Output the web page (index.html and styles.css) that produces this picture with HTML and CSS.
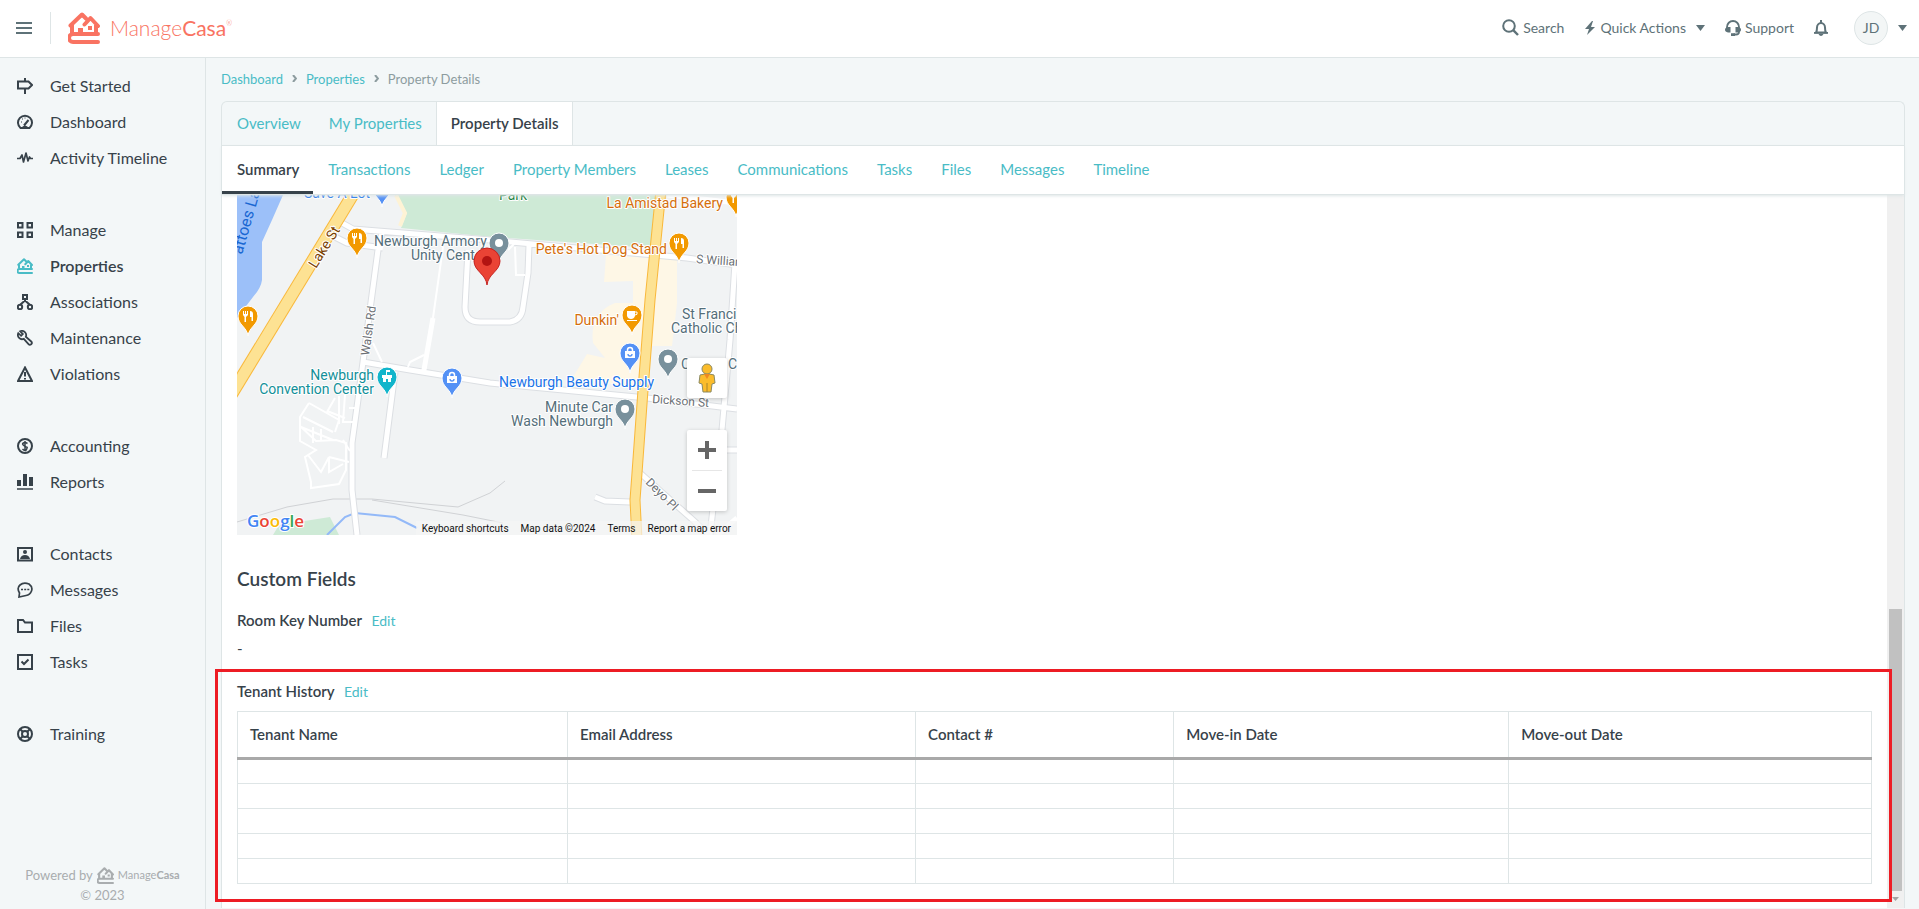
FILE: index.html
```html
<!DOCTYPE html>
<html lang="en">
<head>
	<meta charset="utf-8">
	<title>Property Details - ManageCasa</title>
	<link rel="stylesheet" href="styles.css">
</head>
<body>
  <svg class="defs" aria-hidden="true">
    <symbol id="house" viewBox="0 0 32 32">
      <g fill="none" stroke="currentColor" stroke-width="4" stroke-linecap="round" stroke-linejoin="round">
        <path d="M30 22H5a4 4 0 0 0 0 8h25"/>
        <path d="M4 21v-8M28 21v-8" stroke-linecap="butt"/>
        <path d="M2.500 13.500L14 2.500l4 4M30 14l-7.500-8-6 6.500"/>
      </g>
      <path fill="currentColor" d="M10 21v-5h5v5zM20 14h4v4h-4z"/>
    </symbol>
    <symbol id="pin" viewBox="-10 -10 20 30" overflow="visible">
      <path d="M0 20C-1 11-10 9-10 0a10 10 0 0 1 20 0C10 9 1 11 0 20z"/>
    </symbol>
    <symbol id="fork" viewBox="-6 -6 12 12" overflow="visible">
      <path d="M-5-5h1v3h1v-3h1v3h1v-3h1v4l-2 2v5h-1.500v-5l-1.500-2zM2-5c2 0 3 1 3 3v7H3.500V1H2z" fill="#fff"/>
    </symbol>
    <symbol id="bag" viewBox="-6 -6 12 12" overflow="visible">
      <path d="M-5-2H5v7H-5z" fill="#fff"/>
      <path d="M-2.500-2v-1a2.500 2.500 0 0 1 5 0v1" fill="none" stroke="#fff" stroke-width="1.500"/>
      <path d="M-2 1a2 2 0 0 0 4 0" fill="none" stroke="#5491f5" stroke-width="1.300"/>
    </symbol>
  </svg>

  <header class="header">
    <button class="menu-btn" aria-label="Menu">
      <svg width="16" height="14" viewBox="0 0 16 14"><path d="M0 2h16M0 7h16M0 12h16" stroke="currentColor" stroke-width="2"/></svg>
    </button>
    <a class="brand" href="#">
      <svg class="brand-icon"><use href="#house"/></svg>
      <span class="brand-name">Manage<b>Casa</b><sup>®</sup></span>
    </a>
    <nav class="tools">
      <button class="tool">
        <svg width="17" height="17" viewBox="0 0 17 17" fill="none" stroke="currentColor" stroke-width="2"><circle cx="7" cy="7" r="5.800"/><path d="M11.200 11.200l4.800 4.800" stroke-width="2.400"/></svg>
        Search
      </button>
      <button class="tool">
        <svg width="12" height="14" viewBox="0 0 12 14"><path fill="currentColor" d="M8 0L1 8h4l-2 6 8-8H7l2-6z"/></svg>
        Quick Actions
        <svg class="caret" width="9" height="6" viewBox="0 0 9 6"><path fill="currentColor" d="M0 0h9L4.500 6z"/></svg>
      </button>
      <button class="tool">
        <svg width="16" height="16" viewBox="0 0 16 16"><path d="M2 9V7a6 6 0 0 1 12 0v5q0 2.500-3 2.500H8.500" fill="none" stroke="currentColor" stroke-width="1.800"/><path fill="currentColor" d="M5.500 7v5.500H3Q0 12 0 9.800T3 7zM10.500 7v5.500H13q3-.5 3-2.700T13 7zM6 13.200h4V16H6z"/></svg>
        Support
      </button>
      <button class="tool" aria-label="Notifications">
        <svg width="14" height="16" viewBox="0 0 14 16"><path d="M2 12.500Q3 11 3 7.500a4 4.500 0 0 1 8 0q0 3.500 1 5z" fill="none" stroke="currentColor" stroke-width="2"/><path fill="currentColor" d="M6 0h2v3H6zM0 12h14v1.800H0zM4.500 14h5q-1 2-2.500 2t-2.500-2z"/></svg>
      </button>
      <button class="tool account">
        <span class="avatar">JD</span>
        <svg width="9" height="6" viewBox="0 0 9 6"><path fill="currentColor" d="M0 0h9L4.500 6z"/></svg>
      </button>
    </nav>
  </header>

  <div class="layout">
    <aside class="sidebar">
      <nav>
        <ul class="nav-group">
          <li><a href="#"><svg viewBox="0 0 16 16"><path d="M8 0v3M8 11v5M1 3.500h10.500L15 7l-3.500 3.500H1z"/></svg>Get Started</a></li>
          <li><a href="#"><svg viewBox="0 0 16 16"><path d="M3.500 14A7 7 0 1 1 12.500 14z"/><path d="M7 11.500l4.500-5.500" /><path d="M4 8h1M5 5h1M8 3.500v1" stroke-width="1"/><path class="solid" d="M4 14q4-5 8 0z"/></svg>Dashboard</a></li>
          <li><a href="#"><svg viewBox="0 0 16 16"><path d="M0 8.500h3L5 5l1.500 7L9 3l2 8 1.500-4 1 1.500H16" stroke-width="1.700" stroke-linejoin="round"/></svg>Activity Timeline</a></li>
        </ul>
        <ul class="nav-group">
          <li><a href="#"><svg viewBox="0 0 16 16"><path d="M1 1h4.500v4.500H1zM10.500 1H15v4.500h-4.500zM1 10.500h4.500V15H1zM10.500 10.500H15V15h-4.500z"/></svg>Manage</a></li>
          <li><a class="active" href="#"><svg class="house"><use href="#house"/></svg>Properties</a></li>
          <li><a href="#"><svg viewBox="0 0 16 16"><path d="M6 1h4v4H6zM8 5v2M8 6.500L3.500 10.500M8 6.500l4.500 4"/><circle cx="3" cy="13" r="2.200"/><circle cx="13" cy="13" r="2.200"/></svg>Associations</a></li>
          <li><a href="#"><svg viewBox="0 0 16 16"><path d="M1.300 3.200a4.200 4.200 0 0 0 5.500 5.600l4.700 5.400q1.200 1.200 2.700 0t0-2.700L8.800 6.800a4.200 4.200 0 0 0-5.600-5.500l2.600 2.800-1.700 1.700z" stroke-width="1.800"/></svg>Maintenance</a></li>
          <li><a href="#"><svg viewBox="0 0 16 16"><path d="M8 1.500L15 15H1zM8 6v4.500M8 12v1.500"/></svg>Violations</a></li>
        </ul>
        <ul class="nav-group">
          <li><a href="#"><svg viewBox="0 0 16 16"><circle cx="8" cy="8" r="7"/><path d="M10.500 5.500Q8 4 6.300 5t.7 2.700 3 1.500-.5 2.300-4-.5M8 3v10" stroke-width="1.500"/></svg>Accounting</a></li>
          <li><a href="#"><svg viewBox="0 0 16 16"><path d="M0 15h16" stroke-width="1.500"/><path d="M2 6v6M8 0v12M14 3v9" stroke-width="4"/></svg>Reports</a></li>
        </ul>
        <ul class="nav-group">
          <li><a href="#"><svg viewBox="0 0 16 16"><path d="M1 2h14v12.500H1z"/><path class="solid" d="M3 13q1-4 5-4t5 4z"/><circle class="solid" cx="8" cy="6" r="2"/></svg>Contacts</a></li>
          <li><a href="#"><svg viewBox="0 0 16 16"><path d="M2 15l.5-4Q-.5 6 3 3t9-1q4 3 2.500 7T9 13.500z" stroke-width="1.700"/><path d="M4 7.500h2M7.200 7.500h2M10.300 7.500h2" stroke-width="1.500"/></svg>Messages</a></li>
          <li><a href="#"><svg viewBox="0 0 16 16"><path d="M1 2h5l2 2.500h7V14H1z"/></svg>Files</a></li>
          <li><a href="#"><svg viewBox="0 0 16 16"><path d="M1 1h14v14H1zM4.500 7.500l2.500 2.500 4.500-4.500"/></svg>Tasks</a></li>
        </ul>
        <ul class="nav-group">
          <li><a href="#"><svg viewBox="0 0 16 16"><circle cx="8" cy="8" r="7"/><circle cx="8" cy="8" r="3"/><path d="M3 3l3 3M13 3l-3 3M3 13l3-3M13 13l-3-3"/></svg>Training</a></li>
        </ul>
      </nav>
      <footer class="powered">
        <p>Powered by <svg class="powered-icon"><use href="#house"/></svg> <span class="powered-name">Manage<b>Casa</b></span></p>
        <p>© 2023</p>
      </footer>
    </aside>

    <main class="main">
      <nav class="breadcrumb">
        <a href="#">Dashboard</a>
        <svg width="5" height="7" viewBox="0 0 5 7"><path d="M1 0l3 3.500L1 7" fill="none" stroke="currentColor" stroke-width="2"/></svg>
        <a href="#">Properties</a>
        <svg width="5" height="7" viewBox="0 0 5 7"><path d="M1 0l3 3.500L1 7" fill="none" stroke="currentColor" stroke-width="2"/></svg>
        <span>Property Details</span>
      </nav>

      <div class="panel">
        <nav class="tabs">
          <a href="#">Overview</a>
          <a href="#">My Properties</a>
          <a class="active" href="#">Property Details</a>
        </nav>
        <nav class="subtabs">
          <a class="active" href="#">Summary</a>
          <a href="#">Transactions</a>
          <a href="#">Ledger</a>
          <a href="#">Property Members</a>
          <a href="#">Leases</a>
          <a href="#">Communications</a>
          <a href="#">Tasks</a>
          <a href="#">Files</a>
          <a href="#">Messages</a>
          <a href="#">Timeline</a>
        </nav>

        <div class="panel-body">
          <div class="content">
            <div class="map">
              <svg class="map-canvas" viewBox="0 0 500 340">
                <rect width="500" height="340" fill="#f1f3f4"/>
                <!-- water and parks -->
                <path d="M0 0h46L35 25 25 47v38q-1 8-9 17L0 123z" fill="#9cc0f9"/>
                <path d="M158 0l12 18-6 15 91 9 160 11 4-53z" fill="#ceead6"/>
                <path d="M159 0l9 18-5 13" fill="none" stroke="#fef3d5" stroke-width="4"/>
                <path d="M36 340l6-10 51-8 9 18z" fill="#ceead6"/>
                <path d="M90 340l18-18 10-4 40 4 22 11" fill="none" stroke="#93b9f8" stroke-width="2"/>
                <path d="M369 60l71 5v43l-5 43h-27v44l-72-13 14-23 18 4-12-15q-4-30 22-40h18v-22l-29 1z" fill="#fef7e6"/>
                <g fill="none" stroke="#d0d2d5">
                  <path d="M0 327l50-15 46-8h39l86 8 32-14 15-12M135 305l91 15 40 8"/>
                </g>
                <!-- side roads -->
                <g fill="none" stroke="#dcdfe3" stroke-width="7">
                  <path d="M105 28l11 6 137 11 197 18 50 7M98 42l12 6 36 5M145 38l-4 17-15 112-6 45-5 36v47l5 45M126 167l47 8 80 13 157 15 90 11M231 55l-3 57q0 15 15 15h30q12-2 13-15l5-34 1-28M158 177l-11 86M403 278l53 47 16 15M498 68l-5 77-8 90-12 105M358 302l10 4 25 1M490 255h10"/>
                </g>
                <g fill="none" stroke="#fff" stroke-width="5">
                  <path d="M105 28l11 6 137 11 197 18 50 7M98 42l12 6 36 5M145 38l-4 17-15 112-6 45-5 36v47l5 45M126 167l47 8 80 13 157 15 90 11M231 55l-3 57q0 15 15 15h30q12-2 13-15l5-34 1-28M158 177l-11 86M403 278l53 47 16 15M498 68l-5 77-8 90-12 105M358 302l10 4 25 1M490 255h10M196 123l-9 52M480 340l20-17M430 0l70 8"/>
                </g>
                <g fill="none" stroke="#fff" stroke-width="2">
                  <path d="M206 52l-10 71M187 160l-14 7-2 5M136 148l9 19M278 52l1 28h9M271 55l7-7"/>
                  <path d="M72 208l-9 14v24l16 9-11 7 6 25v6l28-4 7-14V248l-10-3-20 1-16-15M72 208l30 17-4 12M66 222l30 15M64 232l32 13M98 203l-8 14M102 201v28M108 200l-2 27h12M90 216l18 7M112 213h9M106 245l7 11M92 262l20 5M92 262l-8 15-13-17M92 262v15l14-8M76 232v16M84 234v12"/>
                </g>
                <!-- main roads -->
                <g fill="none" stroke="#f9b83a" stroke-width="13">
                  <path d="M118-4L-6 200"/>
                  <path stroke-width="11" d="M424-5l-11 110-7 90-6 83-2 27 2 40"/>
                </g>
                <g fill="none" stroke="#fde293" stroke-width="11">
                  <path d="M118-4L-6 200"/>
                  <path stroke-width="9" d="M424-5l-11 110-7 90-6 83-2 27 2 40"/>
                </g>
                <!-- pins -->
                <g stroke="#fff" stroke-width="1">
                  <g fill="#f29900">
                    <use href="#pin" x="110" y="33" width="20" height="30"/>
                    <use href="#pin" x="1" y="111" width="20" height="30"/>
                    <use href="#pin" x="432" y="38" width="20" height="30"/>
                    <use href="#pin" x="385" y="110" width="20" height="30"/>
                    <use href="#pin" x="489" y="-8" width="20" height="30"/>
                  </g>
                  <g fill="#5491f5">
                    <use href="#pin" x="135" y="-18" width="20" height="30"/>
                    <use href="#pin" x="205" y="173" width="20" height="30"/>
                    <use href="#pin" x="383" y="148" width="20" height="30"/>
                  </g>
                  <g fill="#78909c">
                    <use href="#pin" x="252" y="38" width="20" height="30"/>
                    <use href="#pin" x="421" y="154" width="20" height="30"/>
                    <use href="#pin" x="378" y="204" width="20" height="30"/>
                  </g>
                  <use href="#pin" x="140" y="172" width="20" height="30" fill="#12b5cb"/>
                </g>
                <use href="#fork" x="114" y="37" width="12" height="12"/>
                <use href="#fork" x="5" y="115" width="12" height="12"/>
                <use href="#fork" x="436" y="42" width="12" height="12"/>
                <use href="#fork" x="493" y="-4" width="12" height="12"/>
                <use href="#bag" x="209" y="177" width="12" height="12"/>
                <use href="#bag" x="387" y="152" width="12" height="12"/>
                <path d="M390 116h8v5q-1 3-4 3t-4-3zM390 125h10v1h-10z" fill="#fff"/>
                <path d="M398 117h2q1 3-2 3" fill="none" stroke="#fff"/>
                <path d="M145 180h10v3h-1v4h-3v-3h-2v3h-3v-4h-1zM149 175h4v2h-3v3h-1z" fill="#fff"/>
                <g fill="#fff"><circle cx="262" cy="48" r="4"/><circle cx="431" cy="164" r="4"/><circle cx="388" cy="214" r="4"/></g>
                <!-- labels -->
                <g class="map-label">
                  <g fill="#546e7a">
                    <text x="137" y="51">Newburgh Armory</text>
                    <text x="174" y="65">Unity Center</text>
                    <text x="445" y="124">St Francis</text>
                    <text x="434" y="138">Catholic Church</text>
                    <text x="444" y="174">C</text>
                    <text x="491" y="174">C</text>
                    <text x="376" y="217" text-anchor="end">Minute Car</text>
                    <text x="376" y="231" text-anchor="end">Wash Newburgh</text>
                  </g>
                  <g fill="#d56e0c">
                    <text x="486" y="13" text-anchor="end">La Amistad Bakery</text>
                    <text x="430" y="59" text-anchor="end">Pete's Hot Dog Stand</text>
                    <text x="382" y="130" text-anchor="end">Dunkin'</text>
                  </g>
                  <g fill="#1a73e8">
                    <text x="67" y="3">Save A Lot</text>
                    <text x="262" y="192">Newburgh Beauty Supply</text>
                  </g>
                  <g fill="#129099">
                    <text x="137" y="185" text-anchor="end">Newburgh</text>
                    <text x="137" y="199" text-anchor="end">Convention Center</text>
                  </g>
                  <text x="262" y="5" fill="#188038">Park</text>
                  <text class="water" transform="translate(5 60) rotate(-74)" fill="#1967d2">attoes Lake</text>
                  <text transform="translate(79 74) rotate(-58)" fill="#7a4100">Lake St</text>
                  <g class="street" fill="#6b7075">
                    <text transform="translate(132 161) rotate(-82)">Walsh Rd</text>
                    <text transform="translate(459 68) rotate(4)">S William St</text>
                    <text transform="translate(415 208) rotate(4)">Dickson St</text>
                    <text transform="translate(408 288) rotate(45)">Deyo Pl</text>
                  </g>
                </g>
                <path d="M250 90c-1-11-13-14-13-24a13 13 0 0 1 26 0c0 10-12 13-13 24z" fill="#ea4335" stroke="#c5221f"/>
                <circle cx="250" cy="66" r="5" fill="#b31412"/>
                <text class="google" x="10" y="332"><tspan fill="#4285f4">G</tspan><tspan fill="#ea4335">o</tspan><tspan fill="#fbbc04">o</tspan><tspan fill="#4285f4">g</tspan><tspan fill="#34a853">l</tspan><tspan fill="#ea4335">e</tspan></text>
              </svg>
              <div class="map-controls">
                <button class="pegman" aria-label="Street View">
                  <svg width="18" height="30" viewBox="0 0 18 30"><path d="M2 12q7-3 14 0l1 8-3 1-1 8H5l-1-8-3-1z" fill="#fbbc2b" stroke="#8b8a62"/><circle cx="9" cy="6" r="5" fill="#fbbc2b" stroke="#8b8a62"/><path d="M6 11h6l-3 5z" fill="#ee8a22"/><path d="M9 20v9" stroke="#a8842d"/></svg>
                </button>
                <div class="zoom">
                  <button aria-label="Zoom in"><svg width="18" height="18" viewBox="0 0 18 18"><path d="M7 0h4v7h7v4h-7v7H7v-7H0V7h7z" fill="#666"/></svg></button>
                  <div class="zoom-line"></div>
                  <button aria-label="Zoom out"><svg width="18" height="18" viewBox="0 0 18 18"><path d="M0 7h18v4H0z" fill="#666"/></svg></button>
                </div>
              </div>
              <div class="map-footer">
                <button>Keyboard shortcuts</button>
                <span>Map data ©2024</span>
                <a href="#">Terms</a>
                <a href="#">Report a map error</a>
              </div>
            </div>

            <h2>Custom Fields</h2>
            <h3>Room Key Number <a href="#">Edit</a></h3>
            <p class="value">-</p>
            <h3>Tenant History <a href="#">Edit</a></h3>
            <table class="history">
              <colgroup><col class="col-name"><col class="col-email"><col class="col-contact"><col class="col-in"><col class="col-out"></colgroup>
              <thead>
                <tr>
                  <th>Tenant Name</th>
                  <th>Email Address</th>
                  <th>Contact #</th>
                  <th>Move-in Date</th>
                  <th>Move-out Date</th>
                </tr>
              </thead>
              <tbody>
                <tr><td></td><td></td><td></td><td></td><td></td></tr>
                <tr><td></td><td></td><td></td><td></td><td></td></tr>
                <tr><td></td><td></td><td></td><td></td><td></td></tr>
                <tr><td></td><td></td><td></td><td></td><td></td></tr>
                <tr><td></td><td></td><td></td><td></td><td></td></tr>
              </tbody>
            </table>
          </div>
          <div class="scrollbar">
            <div class="scroll-thumb"></div>
            <svg width="7" height="4" viewBox="0 0 7 4"><path d="M0 0h7L3.500 4z" fill="#a3a3a3"/></svg>
          </div>
        </div>
      </div>
      <div class="highlight"></div>
    </main>
  </div>
</body>
</html>
```

FILE: styles.css
```css
* {
	box-sizing: border-box;
}
body {
	font-family: Lato, "Liberation Sans", sans-serif;
	font-size: 15px;
	color: #37424a;
	background: #f3f7f8;
	margin: 0;
	height: 100vh;
	display: flex;
	flex-direction: column;
	overflow: hidden;
}
a {
	color: #49bcc6;
	text-decoration: none;
}
button {
	font: inherit;
	color: inherit;
	background: none;
	border: 0;
	padding: 0;
}
svg {
	flex-shrink: 0;
}
.defs {
	position: absolute;
	width: 0;
	height: 0;
}

/* header */
.header {
	display: flex;
	align-items: center;
	height: 58px;
	padding: 0 12px 2px 16px;
	background: #fff;
	border-bottom: 1px solid #dee5e6;
	color: #5e7278;
	flex-shrink: 0;
}
.menu-btn {
	display: flex;
	align-items: center;
	height: 32px;
	padding-right: 18px;
	border-right: 1px solid #dee5e6;
}
.brand {
	display: flex;
	align-items: center;
	gap: 10px;
	margin-left: 17px;
	color: #f97362;
}
.brand-icon {
	width: 32px;
	height: 32px;
}
.brand-name {
	font-size: 21px;
	font-weight: 300;
}
.brand-name sup {
	font-size: 7px;
	vertical-align: 10px;
}
.tools {
	display: flex;
	align-items: center;
	margin-left: auto;
	gap: 20px;
	font-size: 14px;
}
.tool {
	display: flex;
	align-items: center;
	gap: 4px;
}
.caret {
	margin-left: 6px;
}
.account {
	margin-left: 6px;
	gap: 10px;
}
.avatar {
	width: 34px;
	line-height: 32px;
	border: 1px solid #dee5e6;
	border-radius: 50%;
	background: #f3f6f6;
	text-align: center;
}

/* sidebar */
.layout {
	display: flex;
	flex: 1;
	min-height: 0;
}
.sidebar {
	display: flex;
	flex-direction: column;
	justify-content: space-between;
	width: 206px;
	padding: 10px 0 4px;
	border-right: 1px solid #dee5e6;
	font-size: 16px;
	flex-shrink: 0;
}
.nav-group {
	list-style: none;
	margin: 0 0 36px;
	padding: 0;
}
.nav-group a {
	display: flex;
	align-items: center;
	gap: 17px;
	height: 36px;
	padding: 0 0 1px 17px;
	color: #37424a;
}
.nav-group svg {
	width: 16px;
	height: 16px;
	fill: none;
	stroke: currentColor;
	stroke-width: 2;
}
.nav-group .house {
	color: #49bcc6;
	stroke: none;
}
.nav-group .solid {
	fill: currentColor;
	stroke: none;
}
.nav-group .active {
	font-weight: 600;
}
.powered {
	font-size: 13px;
	line-height: 20px;
	color: #a9adaf;
	text-align: center;
}
.powered p {
	display: flex;
	justify-content: center;
	align-items: center;
	gap: 4px;
	margin: 0;
}
.powered-icon {
	width: 17px;
	height: 17px;
}
.powered-name {
	font-size: 11px;
}

/* main panel */
.main {
	position: relative;
	display: flex;
	flex-direction: column;
	flex: 1;
	min-width: 0;
	padding: 0 14px 1px 15px;
}
.breadcrumb {
	display: flex;
	align-items: center;
	gap: 9px;
	height: 43px;
	padding-bottom: 2px;
	font-size: 13px;
	color: #8d9c9f;
}
.panel {
	display: flex;
	flex-direction: column;
	flex: 1;
	min-height: 0;
	border: 1px solid #dee5e6;
	border-bottom: 0;
	border-radius: 6px 6px 0 0;
}
.tabs {
	display: flex;
	height: 44px;
	border-bottom: 1px solid #dee5e6;
}
.tabs a, .subtabs a {
	display: flex;
	align-items: center;
	padding: 0 14px 2px;
}
.tabs a:first-child, .subtabs a:first-child {
	padding-left: 15px;
}
.tabs .active {
	background: #fff;
	border: solid #dee5e6;
	border-width: 0 1px;
	font-weight: 600;
	color: #37424a;
}
.subtabs {
	position: relative;
	display: flex;
	gap: 1px;
	height: 49px;
	background: #fff;
	border-bottom: 1px solid #dee5e6;
	box-shadow: 0 1px 3px #dee5e6;
	z-index: 1;
}
.subtabs .active {
	color: #37424a;
	font-weight: 600;
	box-shadow: inset 0 -3px #37424a;
}
.panel-body {
	display: flex;
	flex: 1;
	min-height: 0;
	background: #fff;
}
.content {
	flex: 1;
	padding: 0 15px;
}

/* map */
.map {
	position: relative;
	width: 500px;
	font-family: Roboto, sans-serif;
}
.map-canvas {
	display: block;
	width: 100%;
}
.map-label {
	font-size: 14px;
	stroke: #fff;
	stroke-width: 2px;
	stroke-linejoin: round;
	paint-order: stroke;
}
.water {
	font-size: 16px;
	stroke: none;
}
.street {
	font-size: 12px;
}
.google {
	font-family: "Open Sans", sans-serif;
	font-size: 17px;
	font-weight: 600;
	stroke: #fff;
	stroke-width: 2px;
	paint-order: stroke;
}
.map-controls {
	position: absolute;
	right: 10px;
	bottom: 24px;
	display: flex;
	flex-direction: column;
	gap: 32px;
}
.map-controls button {
	display: flex;
	align-items: center;
	justify-content: center;
	width: 40px;
	height: 40px;
}
.pegman, .zoom {
	background: #fff;
	border-radius: 2px;
	box-shadow: 0 1px 4px rgba(0, 0, 0, 0.2);
}
.zoom-line {
	height: 1px;
	margin: 0 5px;
	background: #e6e6e6;
}
.map-footer {
	position: absolute;
	right: 0;
	bottom: 0;
	display: flex;
	align-items: center;
	gap: 12px;
	height: 14px;
	padding: 0 6px;
	background: rgba(245, 245, 245, 0.7);
	font-size: 10px;
	color: #111;
}
.map-footer a {
	color: #111;
}

/* custom fields */
h2 {
	font-size: 19px;
	font-weight: 600;
	line-height: 24px;
	margin: 32px 0 19px;
}
h3 {
	font-size: 15px;
	font-weight: 600;
	line-height: 20px;
	margin: 0 0 9px;
}
h3 a {
	font-size: 14px;
	font-weight: 400;
	margin-left: 6px;
}
.value {
	margin: 0 0 25px;
	line-height: 16px;
}
.history {
	width: 100%;
	table-layout: fixed;
	border-collapse: collapse;
}
.col-name {
	width: 20.2%;
}
.col-email {
	width: 21.3%;
}
.col-contact {
	width: 15.8%;
}
.col-in {
	width: 20.5%;
}
.col-out {
	width: 22.2%;
}
th, td {
	border: 1px solid #dee5e6;
	padding: 0 12px;
	height: 25px;
	text-align: left;
}
th {
	height: 47px;
	padding-bottom: 2px;
	border-bottom: 3px solid #a9a9a9;
	font-weight: 600;
}
.scrollbar {
	display: flex;
	flex-direction: column;
	align-items: center;
	justify-content: flex-end;
	gap: 6px;
	width: 17px;
	padding-bottom: 7px;
	background: #f0f0f0;
}
.scroll-thumb {
	width: 13px;
	height: 40%;
	background: #c1c1c1;
}
.highlight {
	position: absolute;
	left: 9px;
	right: 27px;
	bottom: 7px;
	height: 233px;
	border: 3px solid #ed1c24;
	pointer-events: none;
}
```
